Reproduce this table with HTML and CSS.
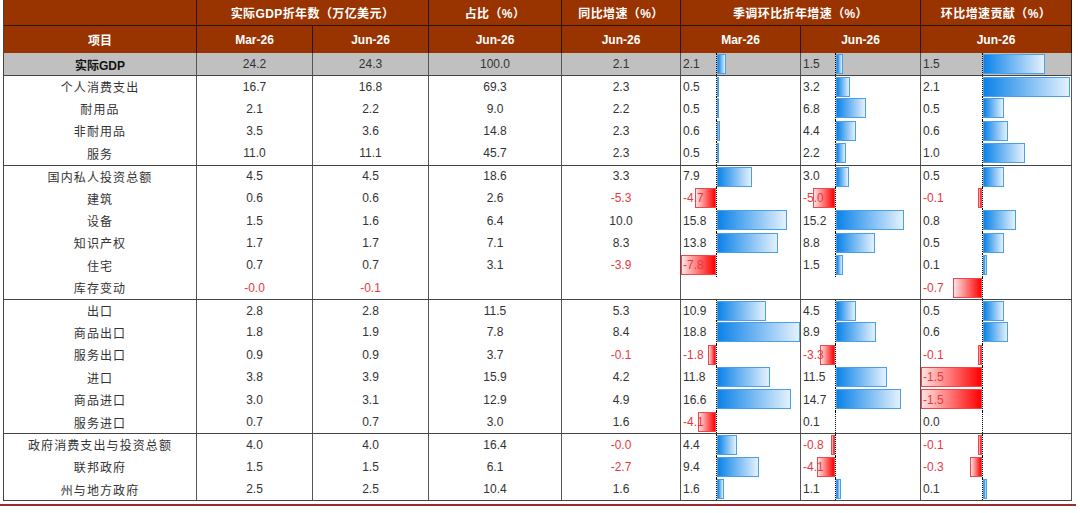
FILE: index.html
```html
<!DOCTYPE html>
<html lang="zh-CN">
<head>
<meta charset="utf-8">
<title>实际GDP</title>
<link rel="stylesheet" href="styles.css">
</head>
<body>
<div class="tbl">
  <div class="hrow hr1">
    <div class="hc"></div>
    <div class="hc span2">实际GDP折年数（万亿美元）</div>
    <div class="hc">占比（%）</div>
    <div class="hc">同比增速（%）</div>
    <div class="hc span2">季调环比折年增速（%）</div>
    <div class="hc">环比增速贡献（%）</div>
  </div>
  <div class="hrow hr2">
    <div class="hc">项目</div>
    <div class="hc">Mar-26</div>
    <div class="hc">Jun-26</div>
    <div class="hc">Jun-26</div>
    <div class="hc">Jun-26</div>
    <div class="hc">Mar-26</div>
    <div class="hc">Jun-26</div>
    <div class="hc">Jun-26</div>
  </div>

  <div class="row total">
    <div class="c lbl b">实际GDP</div><div class="c">24.2</div><div class="c">24.3</div><div class="c">100.0</div><div class="c">2.1</div>
    <div class="c bar m"><span class="v">2.1</span><div class="neg"></div><div class="pos"><i style="width:9.3px"></i></div></div>
    <div class="c bar j"><span class="v">1.5</span><div class="neg"></div><div class="pos"><i style="width:6.7px"></i></div></div>
    <div class="c bar k"><span class="v">1.5</span><div class="neg"></div><div class="pos"><i style="width:62.3px"></i></div></div>
  </div>

  <div class="row gs">
    <div class="c lbl">个人消费支出</div><div class="c">16.7</div><div class="c">16.8</div><div class="c">69.3</div><div class="c">2.3</div>
    <div class="c bar m"><span class="v">0.5</span><div class="neg"></div><div class="pos"><i style="width:2.2px"></i></div></div>
    <div class="c bar j"><span class="v">3.2</span><div class="neg"></div><div class="pos"><i style="width:14.2px"></i></div></div>
    <div class="c bar k"><span class="v">2.1</span><div class="neg"></div><div class="pos"><i style="width:87.2px"></i></div></div>
  </div>
  <div class="row">
    <div class="c lbl">耐用品</div><div class="c">2.1</div><div class="c">2.2</div><div class="c">9.0</div><div class="c">2.2</div>
    <div class="c bar m"><span class="v">0.5</span><div class="neg"></div><div class="pos"><i style="width:2.2px"></i></div></div>
    <div class="c bar j"><span class="v">6.8</span><div class="neg"></div><div class="pos"><i style="width:30.3px"></i></div></div>
    <div class="c bar k"><span class="v">0.5</span><div class="neg"></div><div class="pos"><i style="width:20.8px"></i></div></div>
  </div>
  <div class="row">
    <div class="c lbl">非耐用品</div><div class="c">3.5</div><div class="c">3.6</div><div class="c">14.8</div><div class="c">2.3</div>
    <div class="c bar m"><span class="v">0.6</span><div class="neg"></div><div class="pos"><i style="width:2.7px"></i></div></div>
    <div class="c bar j"><span class="v">4.4</span><div class="neg"></div><div class="pos"><i style="width:19.6px"></i></div></div>
    <div class="c bar k"><span class="v">0.6</span><div class="neg"></div><div class="pos"><i style="width:24.9px"></i></div></div>
  </div>
  <div class="row">
    <div class="c lbl">服务</div><div class="c">11.0</div><div class="c">11.1</div><div class="c">45.7</div><div class="c">2.3</div>
    <div class="c bar m"><span class="v">0.5</span><div class="neg"></div><div class="pos"><i style="width:2.2px"></i></div></div>
    <div class="c bar j"><span class="v">2.2</span><div class="neg"></div><div class="pos"><i style="width:9.8px"></i></div></div>
    <div class="c bar k"><span class="v">1.0</span><div class="neg"></div><div class="pos"><i style="width:41.5px"></i></div></div>
  </div>

  <div class="row gs">
    <div class="c lbl">国内私人投资总额</div><div class="c">4.5</div><div class="c">4.5</div><div class="c">18.6</div><div class="c">3.3</div>
    <div class="c bar m"><span class="v">7.9</span><div class="neg"></div><div class="pos"><i style="width:35.2px"></i></div></div>
    <div class="c bar j"><span class="v">3.0</span><div class="neg"></div><div class="pos"><i style="width:13.4px"></i></div></div>
    <div class="c bar k"><span class="v">0.5</span><div class="neg"></div><div class="pos"><i style="width:20.8px"></i></div></div>
  </div>
  <div class="row">
    <div class="c lbl">建筑</div><div class="c">0.6</div><div class="c">0.6</div><div class="c">2.6</div><div class="c n">-5.3</div>
    <div class="c bar m"><span class="v n">-4.7</span><div class="neg"><i style="width:20.9px"></i></div><div class="pos"></div></div>
    <div class="c bar j"><span class="v n">-5.0</span><div class="neg"><i style="width:22.3px"></i></div><div class="pos"></div></div>
    <div class="c bar k"><span class="v n">-0.1</span><div class="neg"><i style="width:4.2px"></i></div><div class="pos"></div></div>
  </div>
  <div class="row">
    <div class="c lbl">设备</div><div class="c">1.5</div><div class="c">1.6</div><div class="c">6.4</div><div class="c">10.0</div>
    <div class="c bar m"><span class="v">15.8</span><div class="neg"></div><div class="pos"><i style="width:70.3px"></i></div></div>
    <div class="c bar j"><span class="v">15.2</span><div class="neg"></div><div class="pos"><i style="width:67.6px"></i></div></div>
    <div class="c bar k"><span class="v">0.8</span><div class="neg"></div><div class="pos"><i style="width:33.2px"></i></div></div>
  </div>
  <div class="row">
    <div class="c lbl">知识产权</div><div class="c">1.7</div><div class="c">1.7</div><div class="c">7.1</div><div class="c">8.3</div>
    <div class="c bar m"><span class="v">13.8</span><div class="neg"></div><div class="pos"><i style="width:61.4px"></i></div></div>
    <div class="c bar j"><span class="v">8.8</span><div class="neg"></div><div class="pos"><i style="width:39.2px"></i></div></div>
    <div class="c bar k"><span class="v">0.5</span><div class="neg"></div><div class="pos"><i style="width:20.8px"></i></div></div>
  </div>
  <div class="row">
    <div class="c lbl">住宅</div><div class="c">0.7</div><div class="c">0.7</div><div class="c">3.1</div><div class="c n">-3.9</div>
    <div class="c bar m"><span class="v n">-7.8</span><div class="neg"><i style="width:34.7px"></i></div><div class="pos"></div></div>
    <div class="c bar j"><span class="v">1.5</span><div class="neg"></div><div class="pos"><i style="width:6.7px"></i></div></div>
    <div class="c bar k"><span class="v">0.1</span><div class="neg"></div><div class="pos"><i style="width:4.2px"></i></div></div>
  </div>
  <div class="row">
    <div class="c lbl">库存变动</div><div class="c n">-0.0</div><div class="c n">-0.1</div><div class="c"></div><div class="c"></div>
    <div class="c"></div>
    <div class="c"></div>
    <div class="c bar k"><span class="v n">-0.7</span><div class="neg"><i style="width:29.1px"></i></div><div class="pos"></div></div>
  </div>

  <div class="row gs">
    <div class="c lbl">出口</div><div class="c">2.8</div><div class="c">2.8</div><div class="c">11.5</div><div class="c">5.3</div>
    <div class="c bar m"><span class="v">10.9</span><div class="neg"></div><div class="pos"><i style="width:48.5px"></i></div></div>
    <div class="c bar j"><span class="v">4.5</span><div class="neg"></div><div class="pos"><i style="width:20px"></i></div></div>
    <div class="c bar k"><span class="v">0.5</span><div class="neg"></div><div class="pos"><i style="width:20.8px"></i></div></div>
  </div>
  <div class="row">
    <div class="c lbl">商品出口</div><div class="c">1.8</div><div class="c">1.9</div><div class="c">7.8</div><div class="c">8.4</div>
    <div class="c bar m"><span class="v">18.8</span><div class="neg"></div><div class="pos"><i style="width:83px"></i></div></div>
    <div class="c bar j"><span class="v">8.9</span><div class="neg"></div><div class="pos"><i style="width:39.6px"></i></div></div>
    <div class="c bar k"><span class="v">0.6</span><div class="neg"></div><div class="pos"><i style="width:24.9px"></i></div></div>
  </div>
  <div class="row">
    <div class="c lbl">服务出口</div><div class="c">0.9</div><div class="c">0.9</div><div class="c">3.7</div><div class="c n">-0.1</div>
    <div class="c bar m"><span class="v n">-1.8</span><div class="neg"><i style="width:8px"></i></div><div class="pos"></div></div>
    <div class="c bar j"><span class="v n">-3.3</span><div class="neg"><i style="width:14.7px"></i></div><div class="pos"></div></div>
    <div class="c bar k"><span class="v n">-0.1</span><div class="neg"><i style="width:4.2px"></i></div><div class="pos"></div></div>
  </div>
  <div class="row">
    <div class="c lbl">进口</div><div class="c">3.8</div><div class="c">3.9</div><div class="c">15.9</div><div class="c">4.2</div>
    <div class="c bar m"><span class="v">11.8</span><div class="neg"></div><div class="pos"><i style="width:52.5px"></i></div></div>
    <div class="c bar j"><span class="v">11.5</span><div class="neg"></div><div class="pos"><i style="width:51.2px"></i></div></div>
    <div class="c bar k"><span class="v n">-1.5</span><div class="neg"><i style="width:61px"></i></div><div class="pos"></div></div>
  </div>
  <div class="row">
    <div class="c lbl">商品进口</div><div class="c">3.0</div><div class="c">3.1</div><div class="c">12.9</div><div class="c">4.9</div>
    <div class="c bar m"><span class="v">16.6</span><div class="neg"></div><div class="pos"><i style="width:73.9px"></i></div></div>
    <div class="c bar j"><span class="v">14.7</span><div class="neg"></div><div class="pos"><i style="width:65.4px"></i></div></div>
    <div class="c bar k"><span class="v n">-1.5</span><div class="neg"><i style="width:61px"></i></div><div class="pos"></div></div>
  </div>
  <div class="row">
    <div class="c lbl">服务进口</div><div class="c">0.7</div><div class="c">0.7</div><div class="c">3.0</div><div class="c">1.6</div>
    <div class="c bar m"><span class="v n">-4.1</span><div class="neg"><i style="width:18.2px"></i></div><div class="pos"></div></div>
    <div class="c bar j"><span class="v">0.1</span><div class="neg"></div><div class="pos"></div></div>
    <div class="c bar k"><span class="v">0.0</span><div class="neg"></div><div class="pos"></div></div>
  </div>

  <div class="row gs">
    <div class="c lbl">政府消费支出与投资总额</div><div class="c">4.0</div><div class="c">4.0</div><div class="c">16.4</div><div class="c n">-0.0</div>
    <div class="c bar m"><span class="v">4.4</span><div class="neg"></div><div class="pos"><i style="width:19.6px"></i></div></div>
    <div class="c bar j"><span class="v n">-0.8</span><div class="neg"><i style="width:3.6px"></i></div><div class="pos"></div></div>
    <div class="c bar k"><span class="v n">-0.1</span><div class="neg"><i style="width:4.2px"></i></div><div class="pos"></div></div>
  </div>
  <div class="row">
    <div class="c lbl">联邦政府</div><div class="c">1.5</div><div class="c">1.5</div><div class="c">6.1</div><div class="c n">-2.7</div>
    <div class="c bar m"><span class="v">9.4</span><div class="neg"></div><div class="pos"><i style="width:41.8px"></i></div></div>
    <div class="c bar j"><span class="v n">-4.1</span><div class="neg"><i style="width:18.2px"></i></div><div class="pos"></div></div>
    <div class="c bar k"><span class="v n">-0.3</span><div class="neg"><i style="width:12.5px"></i></div><div class="pos"></div></div>
  </div>
  <div class="row">
    <div class="c lbl">州与地方政府</div><div class="c">2.5</div><div class="c">2.5</div><div class="c">10.4</div><div class="c">1.6</div>
    <div class="c bar m"><span class="v">1.6</span><div class="neg"></div><div class="pos"><i style="width:7.1px"></i></div></div>
    <div class="c bar j"><span class="v">1.1</span><div class="neg"></div><div class="pos"><i style="width:4.9px"></i></div></div>
    <div class="c bar k"><span class="v">0.1</span><div class="neg"></div><div class="pos"><i style="width:4.2px"></i></div></div>
  </div>
</div>
<div class="rule"></div>
</body>
</html>
```

FILE: styles.css
```css
* { box-sizing: border-box; }

html, body {
  margin: 0;
  padding: 0;
  background: #ffffff;
}

body {
  font-family: "Liberation Sans", "Noto Sans CJK SC", sans-serif;
  font-size: 12px;
  color: #333333;
}

.tbl {
  margin-left: 3px;
  width: 1069px;
  border-left: 1px solid #444444;
  border-bottom: 1px solid #444444;
}

.hrow,
.row {
  display: grid;
  grid-template-columns: 193px 116px 116px 133px 119px 120px 120px 151px;
}

.hrow {
  background: #993300;
  color: #ffffff;
  font-weight: bold;
}

.hr1 {
  height: 26px;
  border-bottom: 1px solid #2a1508;
  letter-spacing: 0.4px;
}

.hr2 {
  height: 27px;
}

.hc {
  display: flex;
  align-items: center;
  justify-content: center;
  border-right: 1px solid #2a1508;
  white-space: nowrap;
}

.span2 {
  grid-column: span 2;
}

.row {
  height: 22.4px;
}

.row.total {
  height: 22px;
  background: #c0c0c0;
}

.row.gs {
  border-top: 1px solid #444444;
}

.c {
  display: flex;
  align-items: center;
  justify-content: center;
  border-right: 1px solid #555555;
  white-space: nowrap;
  min-width: 0;
}

.lbl {
  letter-spacing: 1.1px;
}

.b {
  font-weight: bold;
  letter-spacing: 0;
  color: #111111;
}

.n {
  color: #e8383e;
}

/* data bar cells */
.c.bar {
  display: grid;
  grid-template-rows: 100%;
  justify-content: stretch;
  align-items: stretch;
}

.m { grid-template-columns: 35px 1fr; }
.j { grid-template-columns: 34px 1fr; }
.k { grid-template-columns: 61px 1fr; }

.v {
  grid-area: 1 / 1 / 2 / 3;
  align-self: center;
  padding-left: 2px;
  position: relative;
  z-index: 1;
}

.neg {
  grid-area: 1 / 1 / 2 / 2;
  display: flex;
  justify-content: flex-end;
  align-items: flex-start;
}

.pos {
  grid-area: 1 / 2 / 2 / 3;
  display: flex;
  justify-content: flex-start;
  align-items: flex-start;
  border-left: 1px dotted #000000;
}

.neg i,
.pos i {
  display: block;
  height: 20px;
  margin-top: 1px;
  flex: none;
}

.pos i {
  background: linear-gradient(to right, #0b83e8, #e4f1fd);
  border: 1px solid #4b9fe6;
}

.neg i {
  background: linear-gradient(to left, #ff0000, #ffe3e3);
  border: 1px solid #f0454a;
}

.rule {
  margin-top: 3px;
  width: 1076px;
  height: 2px;
  background: #9c2b2f;
}
```
